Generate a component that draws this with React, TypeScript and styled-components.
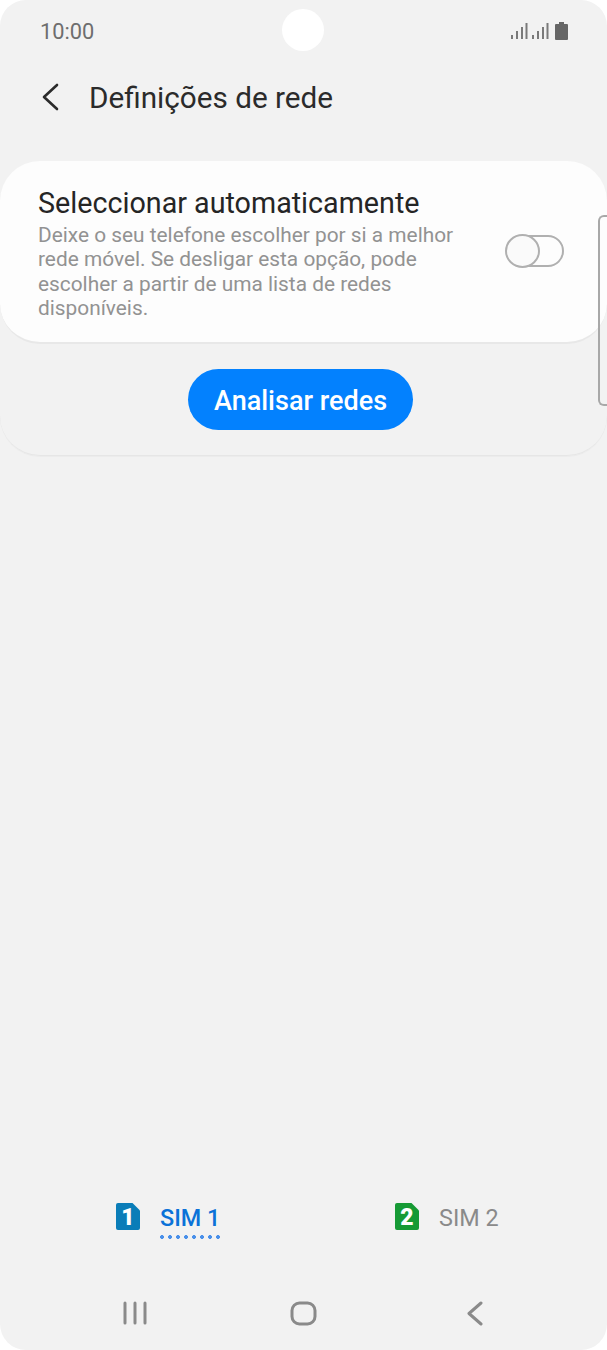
import React from "react";
import styled, { createGlobalStyle } from "styled-components";

const Global = createGlobalStyle`
  html, body { margin: 0; padding: 0; background: #fff; }
  * { box-sizing: border-box; }
`;

const Screen = styled.div`
  position: relative;
  width: 607px;
  height: 1350px;
  background: #f2f2f2;
  border-radius: 26px;
  overflow: hidden;
  display: flex;
  flex-direction: column;
  font-family: Roboto, "Liberation Sans", sans-serif;
`;

const StatusBar = styled.div`
  height: 62px;
  padding: 0 39px 0 40px;
  display: flex;
  align-items: center;
  justify-content: space-between;
`;

const Time = styled.span`
  font-size: 21.8px;
  color: #6e6e6e;
`;

const PunchHole = styled.div`
  position: absolute;
  left: 282px;
  top: 9px;
  width: 42px;
  height: 42px;
  border-radius: 50%;
  background: #fff;
`;

const Header = styled.div`
  height: 70px;
  padding-left: 41px;
  display: flex;
  align-items: center;
  gap: 30px;
`;

const Title = styled.h1`
  margin: 0;
  font-size: 29.7px;
  font-weight: 400;
  color: #2b2b2b;
`;

const Group = styled.section`
  margin-top: 29px;
  height: 295px;
  border-radius: 40px;
  border-bottom: 1px solid #e6e6e6;
  box-shadow: 0 1px 0 #ececec;
  display: flex;
  flex-direction: column;
  align-items: center;
`;

const Card = styled.div`
  width: 100%;
  height: 183px;
  flex: none;
  border-radius: 40px;
  background: #fdfdfd;
  border-bottom: 2px solid #e8e8e8;
  padding: 25px 43px 0 38px;
  display: flex;
  align-items: center;
  justify-content: space-between;
`;

const CardText = styled.div`
  width: 440px;
  align-self: flex-start;
`;

const CardTitle = styled.div`
  font-size: 28.7px;
  line-height: 34px;
  color: #252525;
`;

const CardDesc = styled.div`
  margin-top: 3px;
  font-size: 20.85px;
  line-height: 24.4px;
  color: #929292;
`;

const ToggleTrack = styled.div`
  position: relative;
  width: 58px;
  height: 32px;
  margin-bottom: 26px;
  border: 2px solid #b0b0b0;
  border-radius: 16px;
`;

const ToggleKnob = styled.div`
  position: absolute;
  left: -3px;
  top: -3px;
  width: 35px;
  height: 34px;
  border: 2px solid #b0b0b0;
  border-radius: 50%;
  background: #fafafa;
`;

const ScanButton = styled.button`
  margin: 25px 6px 0 0;
  width: 225px;
  height: 61px;
  border: none;
  border-radius: 31px;
  background: #0381fe;
  color: #fff;
  font-family: Roboto, "Liberation Sans", sans-serif;
  font-size: 27px;
  font-weight: 500;
  padding: 2px 0 0;
`;

const SideHandle = styled.div`
  position: absolute;
  left: 598px;
  top: 215px;
  width: 9px;
  height: 191px;
  border: 2px solid #a8a8a8;
  border-right: none;
  border-radius: 6px 0 0 6px;
`;

const Spacer = styled.div`
  flex: 1;
`;

const SimBar = styled.div`
  display: grid;
  grid-template-columns: 279px 1fr;
  padding-left: 116px;
  height: 48px;
  margin-bottom: 50px;
`;

const SimTab = styled.div`
  display: flex;
  align-items: flex-start;
  gap: 20px;
`;

const SimLabelWrap = styled.div`
  display: flex;
  flex-direction: column;
`;

const SimLabel = styled.span<{ $active?: boolean }>`
  font-size: 23.4px;
  line-height: 29px;
  margin-top: 1px;
  color: ${(p) => (p.$active ? "#0b72d8" : "#8a8a8a")};
  font-weight: ${(p) => (p.$active ? 500 : 400)};
`;

const Dots = styled.div`
  height: 4px;
  margin-top: 2px;
  width: 61px;
  background-image: radial-gradient(circle at 2px 2px, #4a90ea 1.7px, transparent 2.2px);
  background-size: 8px 4px;
  background-repeat: repeat-x;
`;

const NavBar = styled.div`
  height: 49px;
  display: grid;
  grid-template-columns: 123px 167px 176px 1fr;
  align-items: flex-start;
`;

const Cell = styled.div`
  grid-column: ${(p: { $col: number }) => p.$col};
  display: flex;
`;

const SimSvg = styled.svg`
  flex: none;
`;

const SimNum = styled.text`
  font-family: Roboto, "Liberation Sans", sans-serif;
  font-size: 23px;
  font-weight: 900;
  fill: #fff;
`;

const SimIcon = ({ color, n }: { color: string; n: string }) => (
  <SimSvg width="24" height="27" viewBox="0 0 24 27">
    <path
      d="M2 0H16.5L24 7.5V25a2 2 0 0 1-2 2H2a2 2 0 0 1-2-2V2a2 2 0 0 1 2-2Z"
      fill={color}
    />
    <SimNum x="12" y="22" textAnchor="middle">
      {n}
    </SimNum>
  </SimSvg>
);

const SignalIcon = () => (
  <svg width="17" height="18" viewBox="0 0 17 18" fill="#7a7a7a">
    <rect x="0" y="13" width="2" height="4" />
    <rect x="5" y="9" width="2" height="8" />
    <rect x="10" y="5" width="2" height="12" />
    <rect x="14.5" y="1" width="2" height="16" />
  </svg>
);

const StatusIcons = styled.div`
  display: flex;
  align-items: center;
  gap: 4px;
`;

const BatterySvg = styled.svg`
  margin-left: 2px;
`;

const BatteryIcon = () => (
  <BatterySvg width="13" height="18" viewBox="0 0 13 18">
    <path d="M4 0h5v2h3a1 1 0 0 1 1 1v14a1 1 0 0 1-1 1H1a1 1 0 0 1-1-1V3a1 1 0 0 1 1-1h3Z" fill="#666" />
  </BatterySvg>
);

export default function App() {
  return (
    <>
      <Global />
      <Screen>
        <PunchHole />
        <SideHandle />
        <StatusBar>
          <Time>10:00</Time>
          <StatusIcons>
            <SignalIcon />
            <SignalIcon />
            <BatteryIcon />
          </StatusIcons>
        </StatusBar>
        <Header>
          <svg width="18" height="28" viewBox="0 0 18 28" fill="none">
            <path d="M16 2 3 14l13 12" stroke="#2b2b2b" strokeWidth="2.6" strokeLinecap="round" strokeLinejoin="round" />
          </svg>
          <Title>Definições de rede</Title>
        </Header>
        <Group>
          <Card>
            <CardText>
              <CardTitle>Seleccionar automaticamente</CardTitle>
              <CardDesc>
                Deixe o seu telefone escolher por si a melhor rede móvel. Se desligar esta opção, pode
                escolher a partir de uma lista de redes disponíveis.
              </CardDesc>
            </CardText>
            <ToggleTrack>
              <ToggleKnob />
            </ToggleTrack>
          </Card>
          <ScanButton>Analisar redes</ScanButton>
        </Group>
        <Spacer />
        <SimBar>
          <SimTab>
            <SimIcon color="#0a7db8" n="1" />
            <SimLabelWrap>
              <SimLabel $active>SIM 1</SimLabel>
              <Dots />
            </SimLabelWrap>
          </SimTab>
          <SimTab>
            <SimIcon color="#169a35" n="2" />
            <SimLabelWrap>
              <SimLabel>SIM 2</SimLabel>
            </SimLabelWrap>
          </SimTab>
        </SimBar>
        <NavBar>
          <Cell $col={2}>
            <svg width="24" height="24" viewBox="0 0 24 24" fill="none" stroke="#8a8a8a" strokeWidth="3" strokeLinecap="round">
              <path d="M2 2v20M12 2v20M22 2v20" />
            </svg>
          </Cell>
          <Cell $col={3}>
            <svg width="27" height="25" viewBox="0 0 27 25" fill="none">
              <rect x="2" y="2" width="23" height="21" rx="7.5" stroke="#8a8a8a" strokeWidth="3" />
            </svg>
          </Cell>
          <Cell $col={4}>
            <svg width="18" height="25" viewBox="0 0 18 25" fill="none">
              <path d="M15 2 3 12.5 15 23" stroke="#8a8a8a" strokeWidth="3" strokeLinecap="round" strokeLinejoin="round" />
            </svg>
          </Cell>
        </NavBar>
      </Screen>
    </>
  );
}
